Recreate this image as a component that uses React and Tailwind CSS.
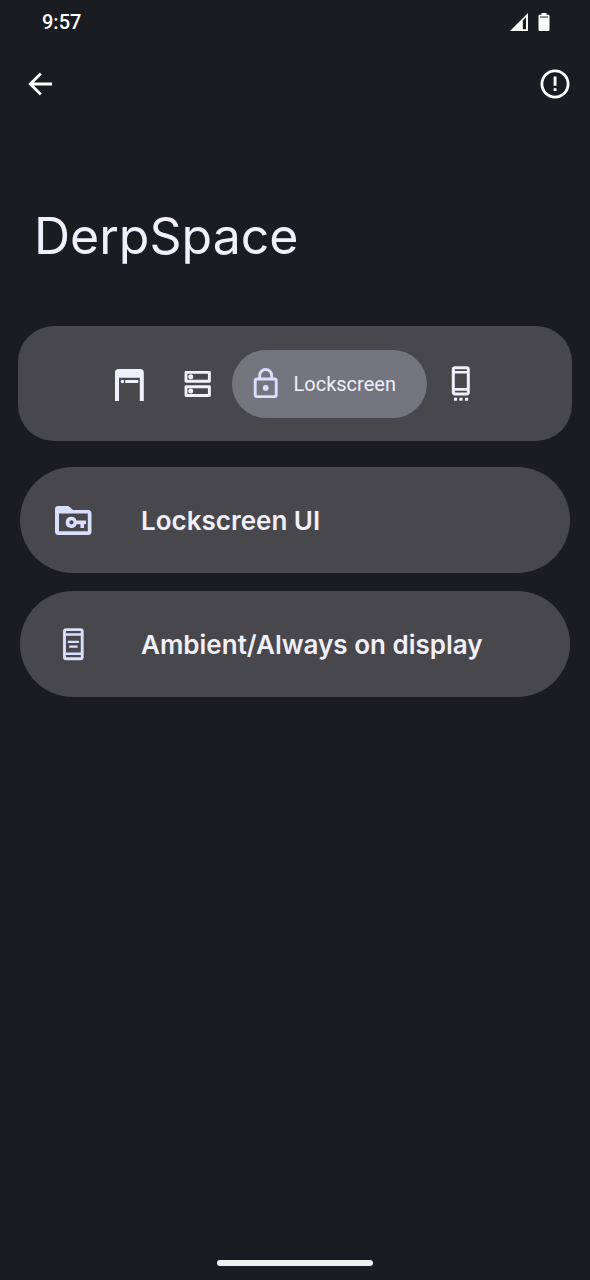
import { useState } from "react";

const SignalIcon = () => (
  <svg width="18" height="18" viewBox="0 0 18 18" aria-hidden="true">
    <path d="M0 18 18 0V18Z" fill="#fff" />
    <path d="M12.800 7.400 16 4.200V16.200H12.800Z" fill="#1b1c21" />
  </svg>
);

const BatteryIcon = () => (
  <svg width="12" height="18" viewBox="0 0 12 18" aria-hidden="true">
    <path d="M3.5 0h5v1.8h1.8q1.2 0 1.2 1.2v13.8q0 1.2-1.2 1.2H1.7Q.5 18 .5 16.800V3q0-1.200 1.200-1.200H3.500Z" fill="#fff" />
    <path d="M2 3.400h8v1.300H2Z" fill="#55555b" />
  </svg>
);

const BackIcon = () => (
  <svg width="24" height="24" viewBox="0 0 24 24" fill="none" stroke="#fff" strokeWidth="2.800" aria-hidden="true">
    <path d="M24 12H3M12.800 1.500 2.300 12l10.500 10.500" />
  </svg>
);

const InfoIcon = () => (
  <svg width="30" height="30" viewBox="0 0 30 30" aria-hidden="true">
    <circle cx="15" cy="15" r="13.100" fill="none" stroke="#fff" strokeWidth="2.800" />
    <path d="M13.600 7.500h2.900v9.300h-2.900ZM13.600 19.200h2.900v2.900h-2.900Z" fill="#fff" />
  </svg>
);

const StatusBarIcon = () => (
  <svg width="40" height="40" viewBox="0 0 40 40" fill="#f0effc" aria-hidden="true">
    <path d="M5 37V8.500Q5 5 8.500 5H30.200Q33.800 5 33.800 8.500V37H29.800V13.700H9V37Z" />
    <rect x="10.800" y="15.800" width="3.200" height="3.400" rx="1.400" />
    <rect x="15" y="16" width="13.400" height="3" rx="1.200" />
  </svg>
);

const PanelsIcon = () => (
  <svg width="40" height="40" viewBox="0 0 40 40" fill="none" stroke="#f0effc" strokeWidth="2.900" strokeLinejoin="round" aria-hidden="true">
    <rect x="8" y="8.400" width="23.400" height="8.800" />
    <rect x="8" y="22.700" width="23.400" height="8.800" />
    <circle cx="12.700" cy="12.800" r="2.500" fill="#f0effc" stroke="none" />
    <circle cx="12.700" cy="27.100" r="2.500" fill="#f0effc" stroke="none" />
  </svg>
);

const LockIcon = () => (
  <svg width="40" height="40" viewBox="0 0 40 40" fill="none" stroke="#d9e0fd" strokeWidth="2.900" aria-hidden="true">
    <rect x="9.200" y="15" width="21" height="17.600" rx="1.600" />
    <path d="M13.700 15V11.500a6 6 0 0 1 12 0V15" />
    <circle cx="19.700" cy="23.900" r="2.900" fill="#d9e0fd" stroke="none" />
  </svg>
);

const NavigationIcon = () => (
  <svg width="40" height="40" viewBox="0 0 40 40" fill="none" stroke="#f0effc" aria-hidden="true">
    <rect x="12.300" y="3.700" width="15" height="26.200" rx="1.600" strokeWidth="3" />
    <path d="M13 8.300h14M13 25.400h14" strokeWidth="2.600" />
    <path d="M13 35.300h3.100M18.400 35.300h3.100M24 35.300h3.100" strokeWidth="3" />
  </svg>
);

const KeyFolderIcon = () => (
  <svg width="40" height="40" viewBox="0 0 40 40" fill="#d9e0fd" aria-hidden="true">
    <path fillRule="evenodd" d="M5 6H15.500L20 10H35Q38.500 10 38.500 13.500V31.500Q38.500 35 35 35H5.500Q2 35 2 31.500V9Q2 6 5 6ZM6 13.500V31.200H34.800V13.500Z" />
    <path fillRule="evenodd" d="M18.500 16.800a5.600 5.600 0 0 1 5.100 3.600H33v3.900H31v3.800H27.400V24.300H23.600A5.600 5.600 0 1 1 18.500 16.800ZM18.500 20.200a2.100 2.100 0 1 0 0 4.200a2.100 2.100 0 1 0 0-4.200Z" />
  </svg>
);

const AmbientIcon = () => (
  <svg width="40" height="40" viewBox="0 0 40 40" fill="none" stroke="#d9e0fd" aria-hidden="true">
    <rect x="11.500" y="5.600" width="17.700" height="29.200" rx="1.600" strokeWidth="2.900" />
    <path d="M12 10.600h17M12 29.800h17" strokeWidth="2.500" />
    <path d="M14.800 17.900h11.100M16.200 22.700h8.400" strokeWidth="2.200" />
  </svg>
);

const tabs = [
  { label: "Status bar", Icon: StatusBarIcon },
  { label: "Quick settings", Icon: PanelsIcon },
  { label: "Lockscreen", Icon: LockIcon },
  { label: "Navigation", Icon: NavigationIcon },
];

const entries = [
  { label: "Lockscreen UI", Icon: KeyFolderIcon },
  { label: "Ambient/Always on display", Icon: AmbientIcon },
];

export default function App() {
  const [active, setActive] = useState("Lockscreen");

  return (
    <div className="flex min-h-screen flex-col bg-[#1b1c21] font-['Inter','Roboto',sans-serif] text-[#f0effc]">
      <div className="flex h-11 items-center justify-between pr-10 pl-[42px] text-white">
        <time className="font-['Roboto',sans-serif] text-xl font-medium">9:57</time>
        <div className="flex items-center gap-2.5">
          <SignalIcon />
          <BatteryIcon />
        </div>
      </div>

      <header className="flex h-20 items-center justify-between px-5">
        <button type="button" aria-label="Back" className="flex size-10 items-center justify-center">
          <BackIcon />
        </button>
        <button type="button" aria-label="About" className="flex h-10 items-center justify-center">
          <InfoIcon />
        </button>
      </header>

      <main className="flex grow flex-col">
        <h1 className="px-[34px] pt-20 text-[50px] leading-16">DerpSpace</h1>

        <nav className="mx-[18px] mt-[58px] flex h-[115px] items-center justify-center rounded-[36px] bg-[#48474c]">
          {tabs.map(({ label, Icon }) => (
            <button
              key={label}
              type="button"
              aria-label={label}
              aria-pressed={active === label}
              onClick={() => setActive(label)}
              className={
                active === label
                  ? "flex h-[68px] w-[195px] items-center gap-2 rounded-full bg-[#75757f] pl-3.5"
                  : "flex h-[68px] w-[68px] items-center justify-center"
              }
            >
              <Icon />
              {active === label && (
                <span className="font-['Roboto',sans-serif] text-xl">{label}</span>
              )}
            </button>
          ))}
        </nav>

        <ul className="mx-5 mt-[26px] flex flex-col gap-[18px]">
          {entries.map(({ label, Icon }) => (
            <li key={label}>
              <button
                type="button"
                className="flex h-[106px] w-full items-center gap-12 rounded-full bg-[#48474c] pl-[33px] text-left text-[26px] font-semibold"
              >
                <Icon />
                {label}
              </button>
            </li>
          ))}
        </ul>
      </main>

      <div className="flex justify-center pb-3.5">
        <div className="h-1.5 w-[156px] rounded-full bg-[#efeff0]" />
      </div>
    </div>
  );
}
